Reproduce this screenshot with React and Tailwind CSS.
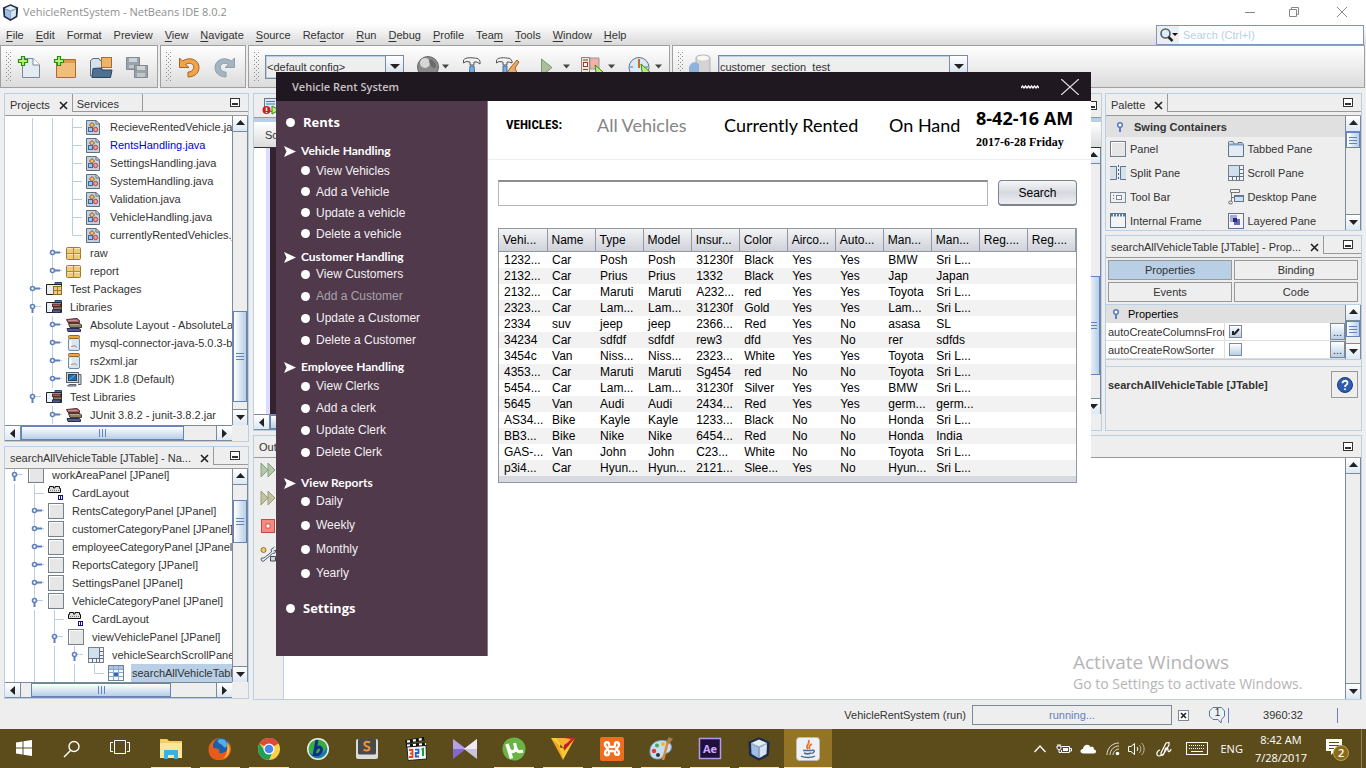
import React from "react";

const JAVA = "font-['Liberation_Sans',Arial,sans-serif]";
const SEGOE = "font-['Open_Sans','Noto_Sans',sans-serif]";

/* ---------- small shared pieces ---------- */

function Svg({ w = 16, h = 16, children, className = "" }) {
  return (
    <svg width={w} height={h} viewBox={`0 0 ${w} ${h}`} className={`shrink-0 ${className}`} aria-hidden="true">
      {children}
    </svg>
  );
}

function Arrow({ dir = "down", w = 9 }) {
  const d = { up: "M0 6 4.5 1 9 6Z", down: "M0 2 9 2 4.5 7Z", left: "M7 0 7 9 2 4.5Z", right: "M2 0 2 9 7 4.5Z" }[dir];
  return (
    <svg width={w} height={w} viewBox="0 0 9 9" aria-hidden="true" className="shrink-0">
      <path d={d} fill="#222" />
    </svg>
  );
}

function VScroll({ before, thumb, after }) {
  return (
    <div className="flex w-4 shrink-0 flex-col border-x border-[#7a8a99] bg-[#eeeeee]">
      <button aria-label="Scroll up" className="flex h-4 shrink-0 items-center justify-center border-b border-[#7a8a99] bg-gradient-to-b from-white to-[#dde8f3]">
        <Arrow dir="up" />
      </button>
      <div className={`${before} min-h-0 basis-0`} />
      <div className={`${thumb} flex shrink-0 flex-col items-center justify-center gap-px border border-[#6382bf] bg-gradient-to-r from-white to-[#b8cfe5]`}>
        <i className="h-px w-2 bg-[#6382bf]" />
        <i className="mt-px h-px w-2 bg-[#6382bf]" />
        <i className="mt-px h-px w-2 bg-[#6382bf]" />
      </div>
      <div className={`${after} min-h-0 basis-0`} />
      <button aria-label="Scroll down" className="flex h-4 shrink-0 items-center justify-center border-t border-[#7a8a99] bg-gradient-to-b from-white to-[#dde8f3]">
        <Arrow />
      </button>
    </div>
  );
}

function HScroll({ before, thumb }) {
  return (
    <div className="mr-4 flex h-4 shrink-0 border-y border-[#7a8a99] bg-[#eeeeee]">
      <button aria-label="Scroll left" className="flex w-4 shrink-0 items-center justify-center border-r border-[#7a8a99] bg-gradient-to-b from-white to-[#dde8f3]">
        <Arrow dir="left" />
      </button>
      <div className={`${before} shrink-0`} />
      <div className={`${thumb} flex shrink-0 items-center justify-center gap-0.5 border border-[#6382bf] bg-gradient-to-b from-white to-[#b8cfe5]`}>
        <i className="h-2 w-px bg-[#6382bf]" />
        <i className="h-2 w-px bg-[#6382bf]" />
        <i className="h-2 w-px bg-[#6382bf]" />
      </div>
      <div className="flex-1" />
      <button aria-label="Scroll right" className="flex w-4 shrink-0 items-center justify-center border-l border-[#7a8a99] bg-gradient-to-b from-white to-[#dde8f3]">
        <Arrow dir="right" />
      </button>
    </div>
  );
}

function MinBox() {
  return (
    <button aria-label="Minimize panel" className="flex h-[9px] w-[10px] shrink-0 items-end justify-center border border-[#333] bg-white pb-px">
      <i className="h-0.5 w-1.5 bg-[#333]" />
    </button>
  );
}

function CloseX() {
  return (
    <button aria-label="Close tab" className="shrink-0">
      <Svg w={9} h={9}><path d="M1 1 8 8M8 1 1 8" stroke="#222" strokeWidth="1.6" /></Svg>
    </button>
  );
}

function TabStrip({ title, tabs = [] }) {
  return (
    <div className="flex h-[22px] shrink-0 border-b border-[#999] pb-[3px]">
      <div className="flex items-center gap-[9px] pl-[5px] pr-1 pt-1">
        <span className="whitespace-nowrap">{title}</span>
        <CloseX />
      </div>
      {tabs.map((t) => (
        <button key={t} className="w-[70px] border-b border-l border-[#999] pl-1 pt-0.5 text-left">{t}</button>
      ))}
      <div className="flex flex-1 items-center justify-end border-b border-l border-[#999] pr-2">
        <MinBox />
      </div>
    </div>
  );
}

/* ---------- tree ---------- */

const treeIcons = {
  java: (
    <Svg w={14} h={16}>
      <path d="M.5 1.500H10L13.500 5V15.500H.5Z" fill="#c3d0dd" stroke="#5d6f80" />
      <path d="M10 1.500V5H13.500Z" fill="#fff" stroke="#5d6f80" />
      <path d="M6 3.500 8.500 6 6 8.500 3.500 6Z" fill="#f5c06a" stroke="#8a5418" />
      <rect x="2.500" y="8.500" width="4" height="4" fill="#9dc0e6" stroke="#40699b" />
      <circle cx="9.500" cy="10.500" r="2.200" fill="#f2958e" stroke="#b64b44" />
    </Svg>
  ),
  pkg: (
    <Svg>
      <rect x=".5" y="2.500" width="14" height="12" rx="1" fill="#eccb7a" stroke="#a57a2b" />
      <path d="M1 8.500H15M7.500 3V14" stroke="#b5893a" />
      <path d="M1.500 3.500H7M8.500 3.500H14M1.500 9.500H7M8.500 9.500H14" stroke="#fbeab9" />
    </Svg>
  ),
  folderPkg: (
    <Svg>
      <path d="M9 3V1.500H15.500V5" fill="#4d77b5" stroke="#29486f" />
      <path d="M.5 3.500H15.500V13.500H.5Z" fill="#e7eff8" stroke="#222" />
      <rect x="7.500" y="5.500" width="8" height="8" fill="#eccb7a" stroke="#8f6a22" />
      <path d="M8 9.500H15M11.500 6V13" stroke="#a57a2b" />
    </Svg>
  ),
  folderBook: (
    <Svg>
      <path d="M9 3V1.500H15.500V5" fill="#4d77b5" stroke="#29486f" />
      <path d="M.5 3.500H15.500V13.500H.5Z" fill="#e7eff8" stroke="#222" />
      <rect x="6.500" y="5" width="8" height="2.500" fill="#a45b5b" stroke="#5a2727" />
      <rect x="7.500" y="8" width="8" height="2.500" fill="#8d7e5c" stroke="#463e2a" />
      <rect x="6.500" y="11" width="8" height="2.500" fill="#59618f" stroke="#282c4e" />
    </Svg>
  ),
  books: (
    <Svg>
      <path d="M.5 2.500 11 1.500 13.500 3.500V5.500L2 5.500Z" fill="#a8666a" stroke="#5c2b2e" />
      <path d="M2.500 6.500H14L15.500 8V10.500H4Z" fill="#8f8266" stroke="#463e2a" />
      <path d="M1 11.500H13L14.500 12.500V14.500H2Z" fill="#555d92" stroke="#282c4e" />
      <path d="M2 3.500H11M4 7.500H13" stroke="#d8c8c0" strokeOpacity=".5" />
    </Svg>
  ),
  jar: (
    <Svg>
      <rect x="2.500" y="3.500" width="11" height="12" rx="1.500" fill="#d7e6f4" stroke="#6b8bb0" />
      <rect x="2.500" y=".5" width="11" height="3" rx="1" fill="#eaa844" stroke="#98661b" />
      <path d="M4.500 5.500V13" stroke="#fff" strokeWidth="2" />
      <path d="M5 12c1-2 2 0 3-1s2 1 3 1" stroke="#d56a4a" fill="none" />
    </Svg>
  ),
  jdk: (
    <Svg>
      <path d="M12.500 3.500H15V13.500H12" fill="#c8cdd2" stroke="#59636d" />
      <rect x=".5" y="1.500" width="12" height="10" fill="#cfd6dc" stroke="#59636d" />
      <rect x="2.500" y="3.500" width="8" height="6" fill="#1f6fb4" stroke="#24415e" />
      <path d="M3 9 9 4" stroke="#69aee2" />
      <path d="M3 13.500H10V15H1.500Z" fill="#b3bbc3" stroke="#59636d" />
    </Svg>
  ),
  panel: (
    <Svg><rect x=".5" y=".5" width="15" height="15" fill="#e6e6e6" stroke="#74808b" /><path d="M1.500 14V1.500H14" stroke="#fff" fill="none" /></Svg>
  ),
  card: (
    <Svg>
      <path d="M.5 7.500V3.500H1.500V1.500H5.500V3H7V1.500H11.500V3.500H12.500V7.500Z" fill="#ddd" stroke="#111" />
      <path d="M2 5.500H12" stroke="#777" strokeDasharray="1 1" />
      <rect x="10.500" y="10.500" width="4" height="4" fill="#fff" stroke="#10108a" /><path d="M12.500 11V15" stroke="#10108a" />
    </Svg>
  ),
  scroll: (
    <Svg>
      <rect x=".5" y=".5" width="15" height="15" fill="#f3f3f3" stroke="#74808b" />
      <rect x="1" y="1" width="10" height="10" fill="#d0dfee" />
      <path d="M11.500 1V15M1 11.500H15M11.500 4.500H15M11.500 8.500H15M4.500 11.500V15M8.500 11.500V15" stroke="#5f6f80" />
    </Svg>
  ),
  table: (
    <Svg>
      <rect x=".5" y=".5" width="15" height="15" fill="#f5f9fd" stroke="#74808b" />
      <path d="M1 1H15V4H1Z" fill="#a9c4e4" />
      <path d="M1 4.500H15M1 7.500H15M1 11.500H15M5.500 1V15M10.500 1V15" stroke="#89a9cf" />
      <rect x="6" y="8" width="4" height="3" fill="#3764b5" />
    </Svg>
  ),
};

function Guides({ width, marks }) {
  return (
    <svg width={width} height="18" viewBox={`0 0 ${width} 18`} className="shrink-0" aria-hidden="true">
      {marks.map(([type, x], i) => {
        const line = { stroke: "#b8cfe5", fill: "none" };
        const c = x + 0.5;
        if (type === "|") return <path key={i} d={`M${c} 0V18`} {...line} />;
        if (type === "T") return <path key={i} d={`M${c} 0V18M${c} 9.500H${x + 10}`} {...line} />;
        if (type === "L") return <path key={i} d={`M${c} 0V9.500H${x + 10}`} {...line} />;
        if (type === "o")
          return (
            <g key={i}>
              <path d={`M${c} 0V18`} {...line} />
              <path d={`M${x + 3} 8.500H${x + 8}`} stroke="#5b7fc0" strokeWidth="2" />
              <path d={`M${x + 8} 8.500H${x + 10}`} {...line} />
              <circle cx={c} cy="8.500" r="2" fill="#fff" stroke="#5b7fc0" strokeWidth="1.600" />
            </g>
          );
        return (
          <g key={i}>
            <path d={`M${c} 0V8M${c} 8.500H${x + 9}`} {...line} />
            <path d={`M${c} 11V15`} stroke="#5b7fc0" strokeWidth="2" />
            <circle cx={c} cy="8.500" r="2" fill="#fff" stroke="#5b7fc0" strokeWidth="1.600" />
          </g>
        );
      })}
    </svg>
  );
}

function TreeRow({ row }) {
  const [label, icon, width, marks, style] = row;
  return (
    <li className="flex h-[18px] shrink-0 items-center">
      <Guides width={width} marks={marks} />
      <span className="flex w-6 shrink-0">{treeIcons[icon]}</span>
      <span className={`whitespace-nowrap ${style || ""}`}>{label}</span>
    </li>
  );
}

const fileMarks = [["|", 27], ["|", 47], ["T", 67]];
const libMarks = [["|", 27], ["o", 47]];
const projectRows = [
  ["RecieveRentedVehicle.java", "java", 81, fileMarks],
  ["RentsHandling.java", "java", 81, fileMarks, "text-[#0000e0]"],
  ["SettingsHandling.java", "java", 81, fileMarks],
  ["SystemHandling.java", "java", 81, fileMarks],
  ["Validation.java", "java", 81, fileMarks],
  ["VehicleHandling.java", "java", 81, fileMarks],
  ["currentlyRentedVehicles.java", "java", 81, [["|", 27], ["|", 47], ["L", 67]]],
  ["raw", "pkg", 61, libMarks],
  ["report", "pkg", 61, libMarks],
  ["Test Packages", "folderPkg", 41, [["o", 27]]],
  ["Libraries", "folderBook", 41, [["v", 27]]],
  ["Absolute Layout - AbsoluteLayout.jar", "books", 61, libMarks],
  ["mysql-connector-java-5.0.3-bin.jar", "jar", 61, libMarks],
  ["rs2xml.jar", "jar", 61, libMarks],
  ["JDK 1.8 (Default)", "jdk", 61, libMarks],
  ["Test Libraries", "folderBook", 41, [["v", 27]]],
  ["JUnit 3.8.2 - junit-3.8.2.jar", "books", 61, [["o", 47]]],
];

const childMarks = [["|", 9], ["o", 29]];
const navRows = [
  ["workAreaPanel [JPanel]", "panel", 23, [["v", 9]]],
  ["CardLayout", "card", 43, [["|", 9], ["T", 29]]],
  ["RentsCategoryPanel [JPanel]", "panel", 43, childMarks],
  ["customerCategoryPanel [JPanel]", "panel", 43, childMarks],
  ["employeeCategoryPanel [JPanel]", "panel", 43, childMarks],
  ["ReportsCategory [JPanel]", "panel", 43, childMarks],
  ["SettingsPanel [JPanel]", "panel", 43, childMarks],
  ["VehicleCategoryPanel [JPanel]", "panel", 43, [["|", 9], ["v", 29]]],
  ["CardLayout", "card", 63, [["|", 9], ["|", 29], ["T", 49]]],
  ["viewVehiclePanel [JPanel]", "panel", 63, [["|", 9], ["|", 29], ["v", 49]]],
  ["vehicleSearchScrollPane [JScrollPane]", "scroll", 83, [["|", 9], ["|", 29], ["|", 49], ["v", 69]]],
  ["searchAllVehicleTable [JTable]", "table", 103, [["|", 9], ["|", 29], ["|", 49], ["|", 69], ["L", 89]], "bg-[#b8cfe5] leading-[18px] -ml-px pl-px"],
];

/* ---------- top of the IDE ---------- */

function Cube({ s = 16 }) {
  return (
    <svg width={s} height={s} viewBox="0 0 24 24" aria-hidden="true" className="shrink-0">
      <path d="M12 1 22 5.500 21 18 12 23 3 18 2 5.500Z" fill="#1e2a4a" stroke="#1e2a4a" strokeWidth="1.500" />
      <path d="M12 2.500 20 6 12 9.500 4 6Z" fill="#e2edf6" />
      <path d="M4 7 11.500 10.500V21L4.500 17Z" fill="#9fc0e2" />
      <path d="M20 7 12.500 10.500V21L19.500 17Z" fill="#d4e4f1" />
      <path d="M4 6.500 12 10 20 6.500M12 10V21" stroke="#b9d2ea" fill="none" />
    </svg>
  );
}

const menus = [
  ["F", "ile"], ["E", "dit"], ["", "Format"], ["", "Preview"], ["V", "iew"], ["N", "avigate"], ["S", "ource"],
  ["a", "ctor", "Ref"], ["R", "un"], ["D", "ebug"], ["P", "rofile"], ["m", "", "Tea"], ["T", "ools"], ["W", "indow"], ["H", "elp"],
];

function TitleBar() {
  return (
    <header className={`flex h-6 items-center bg-white pl-0.5 pr-[18px] text-[#8f8f8f] ${SEGOE}`}>
      <Cube s={17} />
      <h1 className="ml-1 flex-1 text-[11px]">VehicleRentSystem - NetBeans IDE 8.0.2</h1>
      <button aria-label="Minimize"><Svg w={12} h={12}><path d="M1 6.500H11" stroke="#888" /></Svg></button>
      <button aria-label="Restore" className="ml-8"><Svg w={12} h={12}><path d="M1.500 3.500H8.500V10.500H1.500ZM3.500 3V1.500H10.500V8.500H9" fill="none" stroke="#888" /></Svg></button>
      <button aria-label="Close" className="ml-9"><Svg w={12} h={12}><path d="M1 1 11 11M11 1 1 11" stroke="#888" /></Svg></button>
    </header>
  );
}

function MenuBar() {
  return (
    <nav className="flex h-[21px] items-center bg-gradient-to-b from-white to-[#dadada] pl-1.5 pr-0.5">
      <div className="flex flex-1 gap-3">
        {menus.map(([u, rest, pre]) => (
          <button key={(pre || "") + u + rest} className="whitespace-nowrap">{pre}<span className="underline underline-offset-2">{u}</span>{rest}</button>
        ))}
      </div>
      <label className="flex h-5 w-[208px] items-center border border-[#7a98bd] bg-white">
        <span className="flex h-full w-6 items-center bg-[#eeeeee] pl-0.5">
          <Svg w={20} h={16}>
            <circle cx="6.500" cy="6.500" r="4.500" fill="#dcecf8" stroke="#50606e" strokeWidth="1.600" />
            <path d="M9.500 10 13.500 14" stroke="#222" strokeWidth="2.500" /><path d="M13 6H19L16 9Z" fill="#111" />
          </Svg>
        </span>
        <input aria-label="Quick search" placeholder="Search (Ctrl+I)" className="w-full pl-1 outline-none placeholder:text-[#b8cfe5]" />
      </label>
    </nav>
  );
}

function Grip() {
  return (
    <Svg w={6} h={30} className="self-center">
      <path d="M.5 0V30M4.500 0V30" stroke="#8a8a8a" strokeDasharray="1 3" />
      <path d="M2.500 2V30" stroke="#8a8a8a" strokeDasharray="1 3" />
    </Svg>
  );
}

const DropMark = () => <Svg w={7} h={5}><path d="M0 .5H7L3.500 4.500Z" fill="#444" /></Svg>;

function Combo({ label, value, width, bg }) {
  return (
    <div className={`relative flex h-6 ${width} border border-[#7a8a99]`}>
      <select aria-label={label} className={`h-full flex-1 appearance-none border border-[#b8cfe5] pl-0 text-[11px] leading-5 outline-none ${bg}`}>
        <option>{value}</option>
      </select>
      <span className="pointer-events-none absolute inset-y-0 right-0 flex w-[18px] items-center justify-center border-l border-[#7a8a99] bg-gradient-to-b from-white to-[#c9daeb]">
        <Svg w={10} h={6}><path d="M0 0H10L5 5Z" fill="#222" /></Svg>
      </span>
    </div>
  );
}

const plus = <path d="M4.500 1.500H7.500V4.500H10.500V7.500H7.500V10.500H4.500V7.500H1.500V4.500H4.500Z" fill="#b9ef7c" stroke="#2f8a12" strokeWidth="1.200" />;

function ToolButton({ label, children, w = 24 }) {
  return <button aria-label={label} className="shrink-0"><Svg w={w} h={24}>{children}</Svg></button>;
}

function Toolbar() {
  const bar = "flex h-[43px] items-center border border-[#a0a0a0] bg-gradient-to-b from-white to-[#dcdcdc] pl-[5px]";
  return (
    <div className="flex gap-0.5">
      <div className={`${bar} w-[158px]`}>
        <Grip />
        <div className="flex gap-3 pl-[5px]">
          <ToolButton label="New file">
            <path d="M5.500 3.500H16L22.500 10V22.500H5.500Z" fill="#e4ebf2" stroke="#78889a" /><path d="M16 3.500V10H22.500" fill="#fff" stroke="#78889a" />{plus}
          </ToolButton>
          <ToolButton label="New project">
            <path d="M3.500 4.500H22.500V22.500H3.500Z" fill="#f0bd7c" stroke="#a86d2c" /><path d="M4 5H22V8H4Z" fill="#dd9c4c" />{plus}
          </ToolButton>
          <ToolButton label="Open project">
            <path d="M1.500 5.500 4 3.500H10L11 5.500H13V21H1.500Z" fill="#d6e1ec" stroke="#5e6f82" />
            <rect x="12.500" y="2.500" width="10" height="10" fill="#ecb468" stroke="#a86d2c" />
            <path d="M4 13.500 12 13 13 15H23L21.500 22.500H3Z" fill="#4f7191" stroke="#2b4560" />
          </ToolButton>
          <ToolButton label="Save all">
            <path d="M1.500 2.500H14.500V14.500H1.500ZM9.500 10.500H22.500V22.500H9.500Z" fill="#9aa3ab" stroke="#808a93" />
            <path d="M4 3H12V7H4ZM12 11H20V15H12Z" fill="#ced3d8" /><path d="M4 10H9V13H4ZM12 18H20V22H12Z" fill="#c0c6cc" />
          </ToolButton>
        </div>
      </div>
      <div className={`${bar} w-[86px]`}>
        <Grip />
        <div className="flex gap-3 pl-[5px]">
          <ToolButton label="Undo"><path d="M2.500 3V12.500H12L8.500 9.500C13 6.500 18 9.500 16.500 13.500 15.500 16.500 13 17 11 17V22C17 22 22 18.500 22 12.500 22 5 13 1 5.500 6Z" fill="#f0a44a" stroke="#a66417" /></ToolButton>
          <ToolButton label="Redo"><path d="M21.500 3V12.500H12L15.500 9.500C11 6.500 6 9.500 7.500 13.500 8.500 16.500 11 17 13 17V22C7 22 2 18.500 2 12.500 2 5 11 1 18.500 6Z" fill="#a3b5c2" stroke="#8ea1af" /></ToolButton>
        </div>
      </div>
      <div className={`${bar} w-[422px]`}>
        <Grip />
        <div className="ml-[5px]"><Combo label="Configuration" value="<default config>" width="w-[139px]" bg="bg-[#eeeeee]" /></div>
        <span className="ml-3 flex items-center gap-0.5">
          <ToolButton label="Browser">
            <circle cx="12" cy="12" r="10.500" fill="#8b8b8b" stroke="#666" /><circle cx="9" cy="8" r="5" fill="#d6d6d6" /><path d="M14 4c3 1 6 4 6 7s-4 2-5 0-3-5-1-7Z" fill="#6b6b6b" />
          </ToolButton><DropMark />
        </span>
        <span className="ml-3 flex gap-2.5">
          <ToolButton label="Build"><path d="M2.500 5C5 2 10 2.500 17 3.500L19 6V9L16 7H13V10H9V7L5 6.500 2.500 8Z" fill="#f2f2f2" stroke="#555" /><path d="M9 11H13L14 23H8Z" fill="#79aede" stroke="#3f6f9e" /></ToolButton>
          <ToolButton label="Clean and build" w={26}><path d="M1.500 5C4 2 9 2.500 15 3.500L17 6V8L14 7H12V10H8V7L4 6.500 1.500 8Z" fill="#f2f2f2" stroke="#555" /><path d="M8 11H12V23H8Z" fill="#79aede" stroke="#3f6f9e" /><path d="M22 5 24 7 20 13 22 18 12 23 11 19 16 12Z" fill="#e9a865" stroke="#a3642a" /></ToolButton>
        </span>
        <span className="ml-[18px] flex items-center">
          <ToolButton label="Run"><path d="M2.500 4 13 12.500 2.500 21Z" fill="#a9bf9c" stroke="#7c986e" /></ToolButton><DropMark />
        </span>
        <span className="ml-2.5 flex items-center gap-1">
          <ToolButton label="Debug"><rect x="1.500" y="2.500" width="8" height="20" fill="#efe8c8" stroke="#888" /><rect x="3.500" y="7.500" width="4" height="4" fill="#fff" stroke="#b03030" /><path d="M3 14.500H8M3 17.500H8M3 5H8" stroke="#555" /><path d="M10 3H19V14H10Z" fill="#f5b0aa" stroke="#999" /><path d="M15 10 23 17 17 24Z" fill="#b9ef7c" stroke="#2f8a12" /></ToolButton><DropMark />
        </span>
        <span className="ml-3 flex items-center gap-1">
          <ToolButton label="Profile"><circle cx="12" cy="12.500" r="10" fill="#d8eafa" stroke="#5f7485" /><path d="M12 4V13" stroke="#d2691e" strokeWidth="2" /><path d="M3 12H6M18 12H21" stroke="#5f7485" /><path d="M14 9 23 17 16 23Z" fill="#b9ef7c" stroke="#2f8a12" /></ToolButton><DropMark />
        </span>
      </div>
      <div className={`${bar} mr-px flex-1`}>
        <Grip />
        <span className="ml-1"><ToolButton label="Database"><path d="M8 5C8 1 22 1 22 5V21C20 24 10 24 8 21Z" fill="#d4d4d4" stroke="#b0b0b0" /><ellipse cx="15" cy="5" rx="6" ry="2.500" fill="#f8f8f8" /><path d="M1 22V14C3 9 7 8 11 11V22Z" fill="#8fb2df" /></ToolButton></span>
        <div className="ml-1.5"><Combo label="Run target" value="customer_section_test" width="w-[250px]" bg="bg-[#eeeeee]" /></div>
      </div>
    </div>
  );
}

/* ---------- IDE panels ---------- */

const panelBox = "flex flex-col overflow-hidden border border-[#b8cfe5] bg-[#eeeeee]";

function LeftColumn() {
  return (
    <div className="flex w-[245px] shrink-0 flex-col gap-1">
      <section className={`${panelBox} h-[349px]`}>
        <TabStrip title="Projects" tabs={["Services"]} />
        <div className="flex min-h-0 flex-1">
          <ul className="min-w-0 flex-1 overflow-hidden bg-white pt-0.5">
            {projectRows.map((r) => <TreeRow key={r[0]} row={r} />)}
          </ul>
          <VScroll before="grow-[175]" thumb="h-[91px]" after="grow-[7]" />
        </div>
        <HScroll before="w-0" thumb="w-[163px]" />
      </section>
      <section className={`${panelBox} h-[253px]`}>
        <TabStrip title="searchAllVehicleTable [JTable] - Na..." />
        <div className="flex min-h-0 flex-1">
          <ul className="flex min-w-0 flex-1 flex-col justify-end overflow-hidden bg-white">
            {navRows.map((r, i) => <TreeRow key={i} row={r} />)}
          </ul>
          <VScroll before="grow-[15]" thumb="h-[43px]" after="grow-[124]" />
        </div>
        <HScroll before="w-[10px]" thumb="w-[140px]" />
      </section>
    </div>
  );
}

function Editor() {
  return (
    <section className={`${panelBox} min-w-0 flex-1`}>
      <div className="flex h-6 shrink-0 items-center justify-between border-b border-[#999] pl-2 pr-1">
        <Svg w={20} h={18}>
          <rect x="2.500" y="1.500" width="12" height="13" fill="#dbe7f2" stroke="#66788a" /><path d="M4 4.500H13M4 7H13" stroke="#5078a8" />
          <circle cx="4.500" cy="13" r="4" fill="#cc1f1f" /><path d="M4.500 10.500V14M4.500 15V16" stroke="#fff" strokeWidth="1.500" /><path d="M10 9 17 13 10 17Z" fill="#b9ef7c" stroke="#2f8a12" />
        </Svg>
        <MinBox />
      </div>
      <div className="h-1 shrink-0 bg-[#b8cfe5]" />
      <div className="flex h-[26px] shrink-0 items-center border-b border-[#333] bg-gradient-to-b from-white to-[#dcdcdc]">
        <button className="pl-[11px]">Source</button>
      </div>
      <div className="flex min-h-0 flex-1">
        <div className="flex flex-1 bg-white pl-3">
          <div className="w-1 bg-[#dcdcff]" />
          <div className="w-10 bg-[#34222f]" />
        </div>
        <VScroll before="grow-[110]" thumb="h-[99px]" after="grow-[23]" />
      </div>
      <HScroll before="w-0" thumb="w-[500px]" />
    </section>
  );
}

const paletteIcons = {
  Panel: treeIcons.panel,
  "Tabbed Pane": <Svg><path d="M.5 3.500V1L1.500.5H5L6 3H10V1.500H14L15.500 3.500V15.500H.5Z" fill="#e3ebf3" stroke="#5f7488" /><path d="M1 3.500H15" stroke="#7f9fc4" strokeWidth="2" /></Svg>,
  "Split Pane": <Svg><path d="M0 1.500H6.500V14.500H0" fill="#d5e2ee" stroke="#5f7488" /><path d="M16 1.500H10.500V14.500H16" fill="#d5e2ee" stroke="#5f7488" /><path d="M8.500 0V16" stroke="#2f5f9f" strokeDasharray="2 2" /></Svg>,
  "Scroll Pane": treeIcons.scroll,
  "Tool Bar": <Svg><rect x=".5" y="3.500" width="15" height="10" fill="#f0f0f0" stroke="#7a8a99" /><rect x="6.500" y="6.500" width="5" height="4" fill="#fff" stroke="#7a8a99" /><path d="M3.500 6V11" stroke="#666" strokeDasharray="1 2" /></Svg>,
  "Desktop Pane": <Svg><path d="M2.500.5H11.500V3.500H2.500ZM3.500 4V12M3.500 8.500H7" fill="#f5f5f5" stroke="#777" /><rect x="6.500" y="6.500" width="9" height="6" fill="#d5e2ee" stroke="#5f7488" /><path d="M7 7.500H15" stroke="#5484ba" /><ellipse cx="2.500" cy="13.500" rx="2" ry="1.500" fill="#ddd" stroke="#777" /></Svg>,
  "Internal Frame": <Svg><rect x=".5" y=".5" width="15" height="14" fill="#f4f4f4" stroke="#5f7488" /><path d="M1 2H15" stroke="#4f80ac" strokeWidth="3" strokeDasharray="2 1" /></Svg>,
  "Layered Pane": <Svg><rect x=".5" y=".5" width="15" height="15" fill="#f4f4fa" stroke="#5f7488" /><rect x="2" y="2" width="7" height="7" fill="#a8a8d8" /><rect x="6" y="6" width="6" height="6" fill="#6868b0" /><rect x="5" y="5" width="4" height="4" fill="#28287c" /></Svg>,
};

function Knob() {
  return <Svg w={8} h={12}><circle cx="4" cy="4" r="2.300" fill="#fff" stroke="#5b7fc0" strokeWidth="1.600" /><path d="M4 6.500V11" stroke="#5b7fc0" strokeWidth="2" /></Svg>;
}

function PropRow({ label, checked }) {
  return (
    <div className="flex h-[18px] border-b border-[#ddd] bg-white">
      <label htmlFor={label} className="w-[119px] shrink-0 overflow-hidden whitespace-nowrap border-r border-[#ddd] pl-0.5 leading-[18px]">{label}</label>
      <div className="flex flex-1 items-center pl-1">
        <span className="relative flex h-[13px] w-[13px]">
          <input id={label} type="checkbox" defaultChecked={checked} className="peer h-[13px] w-[13px] appearance-none border border-[#7a8a99] bg-gradient-to-b from-white to-[#b8cfe5]" />
          <Svg w={13} h={13} className="pointer-events-none absolute inset-0 hidden peer-checked:block"><path d="M4 6V10M5 9.500 10 4" stroke="#222" strokeWidth="2" /></Svg>
        </span>
      </div>
      <button aria-label={`Edit ${label}`} className="w-[15px] border border-[#7a8a99] bg-gradient-to-b from-white to-[#b8cfe5] leading-3">...</button>
    </div>
  );
}

function RightColumn() {
  return (
    <div className="flex w-[257px] shrink-0 flex-col gap-1">
      <section className={`${panelBox} h-[138px]`}>
        <TabStrip title="Palette" />
        <div className="flex min-h-0 flex-1">
          <div className="min-w-0 flex-1">
            <h2 className="flex h-[21px] items-center gap-2.5 bg-[#e0e0e0] pl-2.5 text-[11px] font-bold"><Knob />Swing Containers</h2>
            <div className="grid grid-cols-2 pl-1">
              {Object.keys(paletteIcons).map((k) => (
                <button key={k} className="flex h-6 items-center gap-1 whitespace-nowrap text-left">{paletteIcons[k]}{k}</button>
              ))}
            </div>
          </div>
          <VScroll before="grow-0" thumb="h-4" after="grow" />
        </div>
      </section>
      <section className={`${panelBox} h-[196px]`}>
        <TabStrip title="searchAllVehicleTable [JTable] - Prop..." />
        <div className="grid grid-cols-2 gap-0.5 py-0.5 pl-0.5 pr-[3px]">
          {["Properties", "Binding", "Events", "Code"].map((b, i) => (
            <button key={b} className={`h-5 border border-[#999] ${i === 0 ? "bg-[#b8cfe5]" : "bg-[#eeeeee]"}`}>{b}</button>
          ))}
        </div>
        <div className="flex h-[56px] shrink-0 border-y border-[#b8cfe5]">
          <div className="min-w-0 flex-1">
            <h2 className="flex h-[18px] items-center gap-2 bg-[#e0e0e0] pl-1.5 text-black"><Knob />Properties</h2>
            <PropRow label="autoCreateColumnsFromModel" checked />
            <PropRow label="autoCreateRowSorter" />
          </div>
          <VScroll before="grow-0" thumb="h-4" after="grow" />
        </div>
        <div className="mt-1.5 flex flex-1 items-start justify-between border-t border-[#b8cfe5] pl-0.5 pr-[3px] pt-1">
          <strong className="leading-7">searchAllVehicleTable [JTable]</strong>
          <button aria-label="Help" className="flex h-[27px] w-[27px] items-center justify-center border border-[#999]">
            <svg width="16" height="16" viewBox="0 0 16 16" aria-hidden="true">
              <circle cx="8" cy="8" r="7.500" fill="#2f5bb0" stroke="#1b3b7c" />
              <path d="M5.500 6.200C5.500 3 10.500 3 10.500 6 10.500 8 8 7.800 8 10M8 11.500V13" stroke="#fff" strokeWidth="1.800" fill="none" />
            </svg>
          </button>
        </div>
      </section>
    </div>
  );
}

function OutputPanel() {
  return (
    <section className={`${panelBox} h-[265px]`}>
      <div className="flex h-[22px] shrink-0 items-center justify-between border-b border-[#999] pl-[5px] pr-2"><span>Output</span><MinBox /></div>
      <div className="flex min-h-0 flex-1">
        <div className="flex w-[30px] shrink-0 flex-col gap-3 border-r border-[#b8cfe5] pl-1.5 pt-1">
          <button aria-label="Re-run"><Svg><path d="M1 1 8 8 1 15ZM8 1 15 8 8 15Z" fill="#b3c7ac" stroke="#86a07e" /></Svg></button>
          <button aria-label="Re-run with options"><Svg><path d="M1 1 8 8 1 15ZM8 1 15 8 8 15Z" fill="#c3c3a2" stroke="#9c9c7a" /></Svg></button>
          <button aria-label="Stop"><Svg><rect x="1.500" y="1.500" width="13" height="13" fill="#f28b82" stroke="#c14a42" /><rect x="6" y="6" width="4" height="4" fill="#fff" stroke="#d65a50" /></Svg></button>
          <button aria-label="Settings"><Svg><path d="M14.500 1 11 3.500 11.500 6 4 12 1.500 12 1 14 3 15.500 5 14 12.500 7.500 15 7 16 4 13.500 5" fill="#e6ebf1" stroke="#556070" /><circle cx="3.500" cy="4" r="2.500" fill="#f3c66c" stroke="#9a7122" /><path d="M10.500 10.500H15.500V15H10.500Z" fill="#ccd5de" stroke="#445" /></Svg></button>
        </div>
        <div className="flex-1 bg-white" />
        <VScroll before="grow-0" thumb="hidden" after="grow" />
      </div>
    </section>
  );
}

function StatusBar() {
  return (
    <div className="flex h-7 items-center justify-end bg-[#eeeeee]">
      <span id="task">VehicleRentSystem (run)</span>
      <div role="progressbar" aria-labelledby="task" className="ml-1.5 h-5 w-[200px] border border-[#7a8a99] text-center leading-[18px] text-[#6382bf]">running...</div>
      <button aria-label="Cancel" className="ml-1.5 flex h-[11px] w-[11px] items-center justify-center border border-[#7a8a99] bg-white"><Svg w={7} h={7}><path d="M1 1 6 6M6 1 1 6" stroke="#222" strokeWidth="1.600" /></Svg></button>
      <button aria-label="1 notification" className="relative ml-5 flex h-[17px] w-[17px] items-center justify-center">
        <Svg w={17} h={17} className="absolute inset-0"><path d="M4 .5H12.500L15.500 4V9L12.500 12.500 12 16 9 12.500H4L.5 9V4Z" fill="#edf2f7" stroke="#5c7894" /></Svg>
        <span className="relative pb-1 text-[10px] leading-3">1</span>
      </button>
      <i className="ml-0.5 h-[15px] w-px bg-[#6382bf]" />
      <span className="w-[108px] text-center">3960:32</span>
      <i className="mr-7 h-[15px] w-px bg-[#6382bf]" />
    </div>
  );
}

/* ---------- vehicle rent window ---------- */

const Dot = () => <i className="h-[9px] w-[9px] shrink-0 rounded-full bg-white" />;
const Pointer = () => <Svg w={12} h={11}><path d="M0 0 12 5.500 0 11 2.500 5.500Z" fill="#fff" /></Svg>;

const groups = [
  { title: "Vehicle Handling", top: "mt-[17px]", list: "mt-[3px]", row: "h-[21px]", items: ["View Vehicles", "Add a Vehicle", "Update a vehicle", "Delete a vehicle"] },
  { title: "Customer Handling", top: "mt-[7px]", list: "", row: "h-[22px]", items: ["View Customers", "Add a Customer", "Update a Customer", "Delete a Customer"] },
  { title: "Employee Handling", top: "mt-[10px]", list: "mt-[2px]", row: "h-[22px]", items: ["View Clerks", "Add a clerk", "Update Clerk", "Delete Clerk"] },
  { title: "View Reports", top: "mt-[14px]", list: "", row: "h-6", items: ["Daily", "Weekly", "Monthly", "Yearly"] },
];

function Sidebar() {
  return (
    <aside className="w-[212px] shrink-0 border-r border-[#8b7c88] bg-[#4f394b] text-white">
      <button className="ml-[10px] mt-[15px] flex h-3 items-center gap-2 font-['Open_Sans',sans-serif] text-[13px] font-bold"><Dot />Rents</button>
      {groups.map((g) => (
        <section key={g.title} className={g.top}>
          <h2 className="flex h-3 items-center gap-[5px] pl-2 font-['Lato',sans-serif] text-[12px] font-bold"><Pointer />{g.title}</h2>
          <ul className={g.list}>
            {g.items.map((it) => (
              <li key={it} className={`flex items-center pl-[25px] ${g.row}`}>
                <button className={`flex items-center gap-1.5 text-[12px] ${it === "Add a Customer" ? "text-[#aaa2a9]" : "text-[#f3f0f2]"}`}><Dot />{it}</button>
              </li>
            ))}
          </ul>
        </section>
      ))}
      <button className="ml-[10px] mt-[17px] flex h-3 items-center gap-2 font-['Open_Sans',sans-serif] text-[13px] font-bold"><Dot />Settings</button>
    </aside>
  );
}

const columns = ["Vehi...", "Name", "Type", "Model", "Insur...", "Color", "Airco...", "Auto...", "Man...", "Man...", "Reg....", "Reg...."];
const vehicles = [
  ["1232...", "Car", "Posh", "Posh", "31230f", "Black", "Yes", "Yes", "BMW", "Sri L..."],
  ["2132...", "Car", "Prius", "Prius", "1332", "Black", "Yes", "Yes", "Jap", "Japan"],
  ["2132...", "Car", "Maruti", "Maruti", "A232...", "red", "Yes", "Yes", "Toyota", "Sri L..."],
  ["2323...", "Car", "Lam...", "Lam...", "31230f", "Gold", "Yes", "Yes", "Lam...", "Sri L..."],
  ["2334", "suv", "jeep", "jeep", "2366...", "Red", "Yes", "No", "asasa", "SL"],
  ["34234", "Car", "sdfdf", "sdfdf", "rew3", "dfd", "Yes", "No", "rer", "sdfds"],
  ["3454c", "Van", "Niss...", "Niss...", "2323...", "White", "Yes", "Yes", "Toyota", "Sri L..."],
  ["4353...", "Car", "Maruti", "Maruti", "Sg454", "red", "No", "No", "Toyota", "Sri L..."],
  ["5454...", "Car", "Lam...", "Lam...", "31230f", "Silver", "Yes", "Yes", "BMW", "Sri L..."],
  ["5645", "Van", "Audi", "Audi", "2434...", "Red", "Yes", "Yes", "germ...", "germ..."],
  ["AS34...", "Bike", "Kayle", "Kayle", "1233...", "Black", "No", "No", "Honda", "Sri L..."],
  ["BB3...", "Bike", "Nike", "Nike", "6454...", "Red", "No", "No", "Honda", "India"],
  ["GAS-...", "Van", "John", "John", "C23...", "White", "No", "No", "Toyota", "Sri L..."],
  ["p3i4...", "Car", "Hyun...", "Hyun...", "2121...", "Slee...", "Yes", "No", "Hyun...", "Sri L..."],
];

function RentWindow() {
  return (
    <div role="dialog" aria-label="Vehicle Rent System" className="absolute left-[276px] top-[72px] z-10 flex h-[584px] w-[815px] flex-col bg-white">
      <div className="flex h-[29px] shrink-0 items-center bg-[#201820] pl-4 pr-3">
        <span className="flex-1 font-['Open_Sans',sans-serif] text-[11px] font-semibold text-[#c8c2c6]">Vehicle Rent System</span>
        <button aria-label="Minimize"><Svg w={18} h={4}><path d="M0 3 1.500 1 3 3 4.500 1 6 3 7.500 1 9 3 10.500 1 12 3 13.500 1 15 3 16.500 1 18 3" stroke="#fff" strokeWidth="1.300" fill="none" /></Svg></button>
        <button aria-label="Close" className="ml-[22px]"><Svg w={18} h={16}><path d="M0 0 18 16M18 0 0 16" stroke="#ddd" strokeWidth="1.300" /></Svg></button>
      </div>
      <div className="flex min-h-0 flex-1">
        <Sidebar />
        <main className="min-w-0 flex-1 bg-white text-black">
          <div className="flex h-[59px] border-b border-[#eeeeee] pl-[18px]">
            <div className="flex h-12 flex-1 items-center whitespace-nowrap font-['Lato','Open_Sans',sans-serif] text-[18px]">
              <h2 className="w-[91px] font-['Roboto_Condensed','Liberation_Sans',sans-serif] text-[13px] font-bold">VEHICLES:</h2>
              <button className="w-[127px] text-left text-[#858585]">All Vehicles</button>
              <button className="w-[165px] text-left">Currently Rented</button>
              <button className="text-left">On Hand</button>
            </div>
            <div className="w-[115px] shrink-0 pt-[7px]">
              <p className="whitespace-nowrap font-['Open_Sans',sans-serif] text-[18px] font-bold leading-5">8-42-16 AM</p>
              <p className="whitespace-nowrap pt-1.5 font-['Liberation_Serif',serif] text-[12px] font-bold leading-4">2017-6-28 Friday</p>
            </div>
          </div>
          <div className="pl-[10px] pr-[14px]">
            <form className="mt-5 flex h-[26px] gap-[10px]">
              <input aria-label="Search vehicles" className="min-w-0 flex-1 border border-t-2 border-[#b5b5b5] border-t-[#8d8d8d] bg-white px-1 text-[12px] outline-none" />
              <button type="button" className="w-[79px] rounded border border-b-2 border-[#7d828c] bg-gradient-to-b from-[#f5f6f8] via-[#d6d9e0] to-[#eceef2] text-[12px]">Search</button>
            </form>
            <div className="mt-[22px] border border-[#9297a1] bg-[#d6d9df] pb-1.5">
              <table className="w-full table-fixed border-collapse text-[12px]">
                <thead>
                  <tr className="h-[22px] bg-gradient-to-b from-[#f3f4f6] to-[#cfd2d9]">
                    {columns.map((c, i) => <th key={i} className="overflow-hidden whitespace-nowrap border-b border-r border-[#9297a1] p-0 pl-1 text-left font-normal">{c}</th>)}
                  </tr>
                </thead>
                <tbody>
                  {vehicles.map((v, r) => (
                    <tr key={r} className="h-4 bg-white even:bg-[#f2f2f2]">
                      {columns.map((_, i) => <td key={i} className="overflow-hidden whitespace-nowrap p-0 pl-[5px] leading-4">{v[i]}</td>)}
                    </tr>
                  ))}
                </tbody>
              </table>
            </div>
          </div>
        </main>
      </div>
    </div>
  );
}

/* ---------- taskbar ---------- */

const T = ({ children }) => <svg width="24" height="24" viewBox="0 0 24 24" aria-hidden="true">{children}</svg>;

const apps = [
  ["File Explorer", true, <T><path d="M1 2H8L10 4H23V21H1Z" fill="#f3cf63" /><path d="M1 6H23V21H1Z" fill="#fde697" /><path d="M5 22V13H19V22H15V18H9V22Z" fill="#3ab1e6" /></T>],
  ["Firefox", true, <T><circle cx="12" cy="12" r="11" fill="#e4641c" /><circle cx="13" cy="9" r="8" fill="#1c5fa8" /><path d="M13 2c4 0 6 3 6 6s-3 3-4 1-4-2-5-4 1-3 3-3Z" fill="#4fb0e6" /><path d="M1.500 7C3 13 7 10 10 12S9 17 14 16s6-3 5-9c4 5 4 15-7 16S-1 14 1.500 7Z" fill="#e95b1a" /><path d="M19 5c4 5 4 14-4 17 4-4 5-9 4-17Z" fill="#fbb33b" /></T>],
  ["Chrome", true, <T><circle cx="12" cy="12" r="11" fill="#fdd045" /><path d="M12 12 2.500 6.500A11 11 0 0 1 21.500 6.500Z" fill="#dd4b3e" /><path d="M12 1A11 11 0 0 1 21.500 6.500L12 7Z" fill="#dd4b3e" /><path d="M2.500 6.500A11 11 0 0 0 12 23L16 14 8 14Z" fill="#1ca05c" /><circle cx="12" cy="12" r="5.500" fill="#fff" /><circle cx="12" cy="12" r="4.300" fill="#4b86ee" /></T>],
  ["Browser", false, <T><circle cx="12" cy="12" r="11" fill="#e6f0ec" /><circle cx="12" cy="12" r="9.500" fill="#3aaa42" /><path d="M3 15C8 20 18 19 21 9V14C19 22 7 24 3 15Z" fill="#1b77b8" /><path d="M11 3 8 19M9 14C10 9 16 9 15.500 13S11 19 8.500 17" stroke="#0c2f87" strokeWidth="3" fill="none" /></T>],
  ["Sublime Text", false, <T><rect x="1" y="2" width="22" height="20" rx="2" fill="#dcdcdc" /><rect x="3" y="1.500" width="18" height="16" rx="1.500" fill="#494949" /><path d="M15 5.500C12 4 9 5 9.500 7.500S15 9 14.500 11.500 11 14 8.500 12.500" stroke="#f39132" strokeWidth="2" fill="none" /></T>],
  ["Media Player Classic", false, <T><path d="M3 10 22 8.500 22.500 22 4 23.500Z" fill="#f8f8f8" stroke="#222" /><path d="M2 8.500 22 7" stroke="#111" strokeWidth="3" /><path d="M3 8.400 22 7" stroke="#fff" strokeWidth="2" strokeDasharray="3 3" /><path d="M1.500 5 21 1.500" stroke="#111" strokeWidth="3.500" /><path d="M3 4.700 21 1.500" stroke="#fff" strokeWidth="2.300" strokeDasharray="3 3" /><path d="M5 13H8.500V20H5M6 16.500H8.500" stroke="#e04a1c" strokeWidth="1.800" fill="none" /><path d="M11 12.700H14.500V16H11.700V19.500H15" stroke="#2264c4" strokeWidth="1.800" fill="none" /><path d="M17.500 12.500 19 12V19" stroke="#1d9a3a" strokeWidth="2" fill="none" /></T>],
  ["KMPlayer", false, <T><path d="M0 2 13 12 0 22Z" fill="#8168c9" /><path d="M0 2 13 12 0 12Z" fill="#b3a2ea" /><path d="M24 2 11 12 24 22Z" fill="#c9c4dc" /><path d="M24 2 11 12H24Z" fill="#eeeaf8" /></T>],
  ["uTorrent", true, <T><circle cx="12" cy="12" r="11.500" fill="#69b544" /><path d="M5 7 9.500 21.500" stroke="#fff" strokeWidth="3.500" /><path d="M6 9C7 16 13.500 17 13.500 10L12.500 6M13 7C14 14 16 16 21 14" stroke="#fff" strokeWidth="3" fill="none" /></T>],
  ["VideoPad", true, <T><path d="M0 1H12L8 12Z" fill="#fbd02f" /><path d="M0 1 12 23 8 8Z" fill="#f0a42a" /><path d="M12 1H24L14 10Z" fill="#d5232f" /><path d="M5 1H13L20 2 12 11Z" fill="#f6b32c" /><path d="M24 1 12 23 8 10 14 12Z" fill="#f9c72e" /><path d="M24 1 13 14 13 8Z" fill="#c41c2c" /></T>],
  ["XAMPP", true, <T><rect width="24" height="24" rx="2" fill="#ef6d1f" /><path d="M9 7C9 4 4 5 5 8S8 11 8 12 5 13 5 16 9 19 9 16 9 14 12 14 15 14 15 16 19 19 19 16 16 13 16 12 19 11 19 8 15 4 15 7 15 10 12 10 9 10 9 7Z" stroke="#fff" strokeWidth="2.400" fill="none" /></T>],
  ["Paint", true, <T><path d="M1 14C1 6 9 2 17 4S23 15 18 16 15 22 9 22 1 19 1 14Z" fill="#c4def2" stroke="#7fa5c4" /><circle cx="5" cy="14" r="2.200" fill="#e23c36" /><circle cx="8" cy="8.500" r="2" fill="#48aa48" /><circle cx="14" cy="7" r="2" fill="#f2b632" /><circle cx="9" cy="18" r="2" fill="#333" /><path d="M14 23 19 4" stroke="#dc8a35" strokeWidth="2.500" /><path d="M17 5 20 0 24 2 20 7Z" fill="#a87e4d" /></T>],
  ["After Effects", true, <T><rect x="1.500" y="1.500" width="21" height="20" fill="#1e0f3c" stroke="#b39be8" strokeWidth="1.500" /><text x="12" y="16" textAnchor="middle" fontFamily="Open Sans" fontWeight="700" fontSize="11" fill="#d3a7ff">Ae</text></T>],
  ["NetBeans", true, <Cube s={24} />],
  ["Java", true, <T><rect x=".5" y=".5" width="23" height="23" rx="3" fill="#eef0f2" stroke="#bbb" /><path d="M12 12C8 9 15 7 12.500 3M14 12C12 10 14 8 16 7" stroke="#e8732a" strokeWidth="1.700" fill="none" /><path d="M7 13.500H16M8 16C10 17 13 17 15 16M16 13C20 13 18 16 15.500 16.500M5 19C8 21 16 21 19 19" stroke="#4a6f95" strokeWidth="1.500" fill="none" /></T>],
];

function Taskbar() {
  const s = { stroke: "#fff", fill: "none" };
  return (
    <footer className={`flex h-10 items-center bg-[#5c4c1c] text-white ${SEGOE}`}>
      <div className="flex">
        <button aria-label="Start" className="flex w-12 justify-center"><Svg w={16} h={16}><path d="M0 2.500 6.500 1.500V7.500H0ZM7.500 1.300 16 0V7.500H7.500ZM0 8.500H6.500V14.500L0 13.500ZM7.500 8.500H16V16L7.500 14.700Z" fill="#fff" /></Svg></button>
        <button aria-label="Search" className="flex w-12 justify-center"><Svg w={18} h={18}><circle cx="11" cy="6.500" r="5" {...s} strokeWidth="1.400" /><path d="M7.500 10.500 1 17" {...s} strokeWidth="1.500" /></Svg></button>
        <button aria-label="Task view" className="flex w-12 justify-center"><Svg w={20} h={14}><path d="M4.500.5H15.500V13.500H4.500ZM3 2.500H.5V11.500H3M17 2.500H19.500V11.500H17" {...s} /></Svg></button>
      </div>
      <div className="ml-[3px] flex gap-px">
        {apps.map(([name, open, icon], i) => (
          <button key={name} aria-label={name} className={`flex h-10 w-12 flex-col items-center justify-between pt-2 ${i === 13 ? "bg-[#937324]" : ""}`}>
            {icon}
            <i className={`h-0.5 ${i === 13 ? "w-12" : "w-10"} ${open ? "bg-[#fbe1a4]" : ""}`} />
          </button>
        ))}
      </div>
      <div className="ml-auto flex items-center">
        <Svg w={12} h={8}><path d="M.5 7 6 1 11.500 7" {...s} strokeWidth="1.300" /></Svg>
        <Svg w={16} h={12} className="ml-2.5"><path d="M5.500 3.500H13.500V9.500H5.500V7M14 5.500H15.500V8H14M1 3H5V5.500L3 7 1 5.500ZM2 3V1M4 3V1M3 7V9.500H5" {...s} /><path d="M7 5H12V8H7Z" fill="#fff" /></Svg>
        <Svg w={16} h={10} className="ml-2"><path d="M3.500 9.500C-1 9.500 0 5 3 5 3 1 8.500-1 10.500 3 14 2 14 5 14 5.500 17 6 16.500 9.500 14 9.500Z" fill="#fff" /></Svg>
        <Svg w={14} h={14} className="ml-2.5"><path d="M1 13C1 6 6 1 13 1M4 13C4 8 8 4 13 4M7 13C7 10 10 7 13 7" {...s} opacity=".8" /><circle cx="11.500" cy="11.500" r="1.800" fill="#fff" /></Svg>
        <Svg w={18} h={14} className="ml-2"><path d="M.5 4.500H3L6.500 1.500V12.500L3 9.500H.5ZM9 5C10 6 10 8 9 9" {...s} /><path d="M11 3C13.500 5 13.500 9 11 11M13.500 1C17 4 17 10 13.500 13" {...s} opacity=".6" /></Svg>
        <Svg w={16} h={16} className="ml-2.5"><path d="M5 12 10 2 13 1.500 13 4 7 14 5 14.500ZM4 9C0 10 0 15 3 15S9 12 9 9 12 6 12 9 15 10 15 8" {...s} strokeWidth="1.200" /></Svg>
        <Svg w={22} h={14} className="ml-3.5"><rect x=".5" y=".5" width="21" height="12" {...s} /><path d="M3 3.500H19M3 6.500H19" {...s} strokeDasharray="1 1" /><path d="M5 9.500H17" {...s} /></Svg>
        <span className="ml-3 text-[11px]">ENG</span>
        <p className="ml-3 text-center text-[11px] leading-[18px]">8:42 AM<br />7/28/2017</p>
        <button aria-label="2 notifications" className="relative ml-[18px] mr-3 h-6 w-6">
          <Svg w={24} h={24}><path d="M1 2H17V14H10L6 18V14H1Z" fill="#fff" /><path d="M4 5.500H14M4 8.500H14M4 11.500H9" stroke="#5c4c1c" /><circle cx="16" cy="16" r="7.500" fill="#8c6a1c" stroke="#c0a258" /></Svg>
          <span className="absolute left-[13px] top-2 text-[11px] font-semibold leading-4">2</span>
        </button>
        <i className="mr-1 h-10 w-px bg-[#8d825f]" />
      </div>
    </footer>
  );
}

export default function App() {
  return (
    <div className={`relative flex min-h-screen flex-col bg-[#eeeeee] text-[11px] leading-4 text-[#333] ${JAVA}`}>
      <TitleBar />
      <MenuBar />
      <Toolbar />
      <div className="flex flex-1 gap-1 pb-px pl-1 pr-1 pt-[5px]">
        <LeftColumn />
        <div className="flex min-w-0 flex-1 flex-col gap-1">
          <div className="flex h-[338px] gap-[3px]">
            <Editor />
            <RightColumn />
          </div>
          <OutputPanel />
        </div>
      </div>
      <StatusBar />
      <Taskbar />
      <RentWindow />
      <div className={`pointer-events-none absolute left-[1073px] top-[650px] whitespace-nowrap text-[#b5b5b5] ${SEGOE}`}>
        <p className="text-[19px] leading-6">Activate Windows</p>
        <p className="text-[14px] leading-5">Go to Settings to activate Windows.</p>
      </div>
    </div>
  );
}
